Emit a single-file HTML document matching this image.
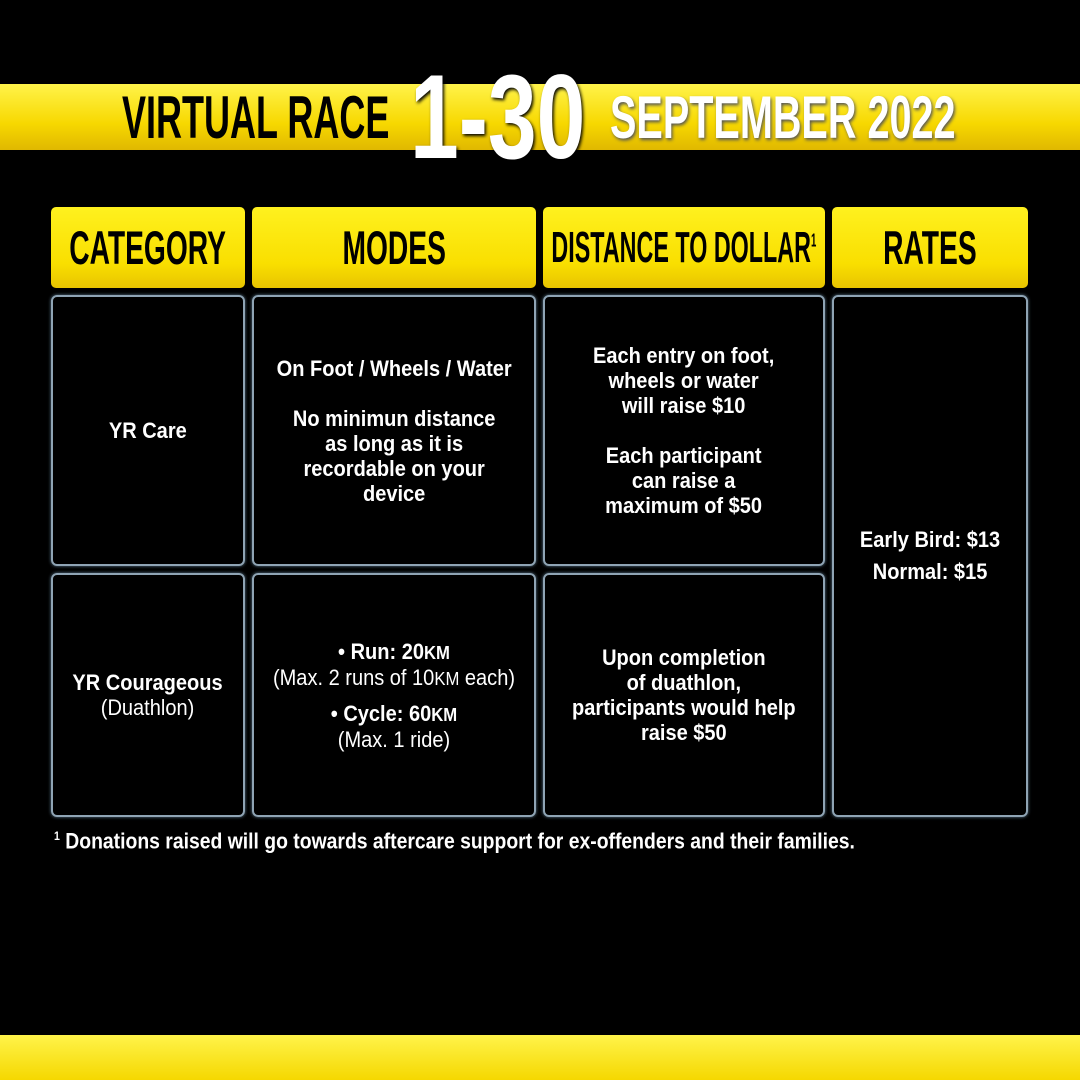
<!DOCTYPE html>
<html><head><meta charset="utf-8"><style>
*{margin:0;padding:0;box-sizing:border-box}
body{width:1080px;height:1080px;background:#000;position:relative;overflow:hidden;font-family:"Liberation Sans",sans-serif;color:#fff}
.band{position:absolute;left:0;top:84px;width:1080px;height:66px;background:linear-gradient(#fff34a,#f7d800 60%,#e0b800)}
.t{position:absolute;font-weight:bold;white-space:nowrap;transform-origin:left top;line-height:1}
.hd{position:absolute;top:207px;height:81px;border-radius:5px;background:linear-gradient(#fff11f,#f9df00 70%,#e8c400);display:flex;align-items:center;justify-content:center;color:#000;font-weight:bold;font-size:47px;white-space:nowrap;overflow:visible}
.hd span{display:inline-block;transform:scaleX(.6)}
.c{position:absolute;border:2px solid #8fa4b4;border-radius:6px;box-shadow:0 0 3px #5c7a90;display:flex;align-items:center;justify-content:center;text-align:center;font-weight:bold;font-size:22px;line-height:25px;white-space:nowrap}
.c>div{transform:scaleX(.91)}
.n{font-weight:normal}
.bot{position:absolute;left:0;top:1035px;width:1080px;height:45px;background:linear-gradient(#fff34a,#f5d800)}
</style></head><body>
<div class="band"></div>
<div class="t" style="left:122px;top:88px;font-size:60px;color:#000;transform:scaleX(.6)">VIRTUAL RACE</div>
<div class="t" style="left:410px;top:57px;font-size:120px;color:#fff;transform:scaleX(.73);text-shadow:2px 2px 4px #000">1-30</div>
<div class="t" style="left:610px;top:88px;font-size:60px;color:#fff;transform:scaleX(.66);text-shadow:2px 2px 4px #555">SEPTEMBER 2022</div>

<div class="hd" style="left:51px;width:194px"><span>CATEGORY</span></div>
<div class="hd" style="left:252px;width:284px"><span>MODES</span></div>
<div class="hd" style="left:543px;width:282px;font-size:44px"><span style="transform:scaleX(.53)">DISTANCE TO DOLLAR<sup style="font-size:18px">1</sup></span></div>
<div class="hd" style="left:832px;width:196px"><span>RATES</span></div>

<div class="c" style="left:51px;top:295px;width:194px;height:271px"><div>YR Care</div></div>
<div class="c" style="left:252px;top:295px;width:284px;height:271px"><div>On Foot / Wheels / Water<br><br>No minimun distance<br>as long as it is<br>recordable on your<br>device</div></div>
<div class="c" style="left:543px;top:295px;width:282px;height:271px"><div>Each entry on foot,<br>wheels or water<br>will raise $10<br><br>Each participant<br>can raise a<br>maximum of $50</div></div>
<div class="c" style="left:832px;top:295px;width:196px;height:522px;line-height:32px"><div>Early Bird: $13<br>Normal: $15</div></div>

<div class="c" style="left:51px;top:573px;width:194px;height:244px"><div>YR Courageous<br><span class="n">(Duathlon)</span></div></div>
<div class="c" style="left:252px;top:573px;width:284px;height:244px"><div>• Run: 20<small>KM</small><br><span class="n">(Max. 2 runs of 10<small>KM</small> each)</span><div style="height:10px"></div>• Cycle: 60<small>KM</small><br><span class="n">(Max. 1 ride)</span></div></div>
<div class="c" style="left:543px;top:573px;width:282px;height:244px"><div>Upon completion<br>of duathlon,<br>participants would help<br>raise $50</div></div>

<div class="t" style="left:54px;top:830px;font-size:22px;font-weight:bold;transform:scaleX(.88)"><sup style="font-size:12px">1</sup> Donations raised will go towards aftercare support for ex-offenders and their families.</div>
<div class="bot"></div>
</body></html>
